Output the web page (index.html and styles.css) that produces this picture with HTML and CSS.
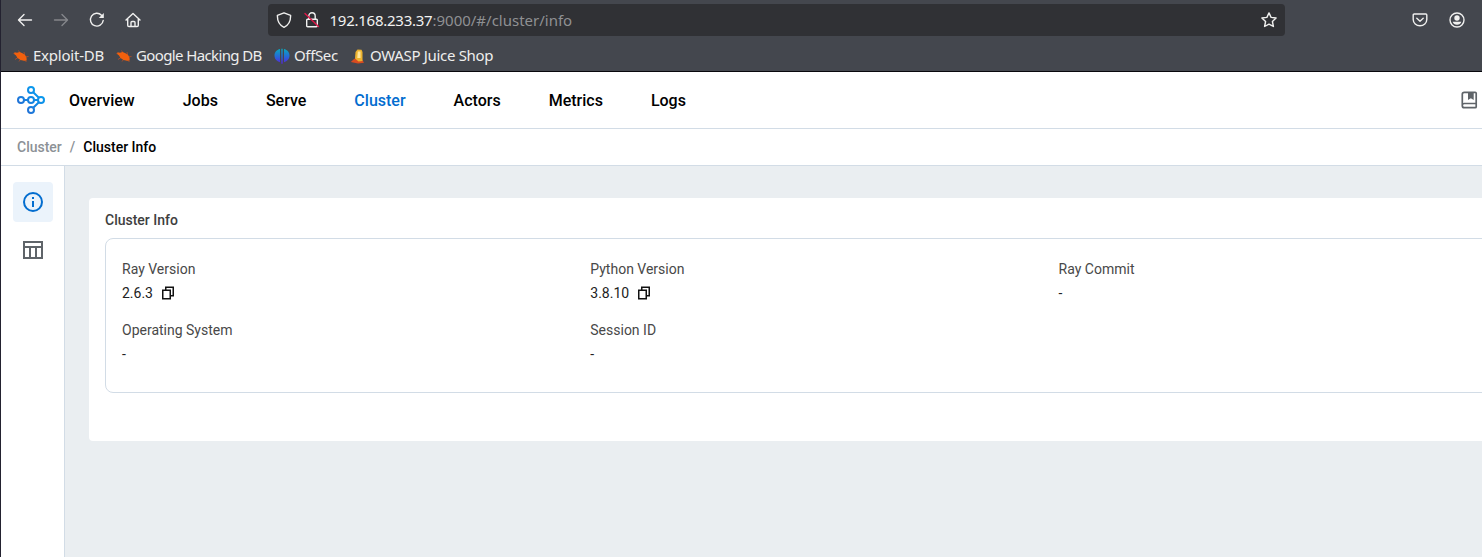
FILE: index.html
```html
<!DOCTYPE html>
<html lang="en">
<head>
<meta charset="utf-8">
<title>Cluster Info</title>
<link rel="stylesheet" href="styles.css">
</head>
<body>
<svg class="defs" width="0" height="0">
  <defs>
    <linearGradient id="ray" x1="0" y1="28" x2="28" y2="0" gradientUnits="userSpaceOnUse"><stop offset="0" stop-color="#2a62cc"/><stop offset="1" stop-color="#00aaf8"/></linearGradient>
    <linearGradient id="offsec" x1="0" y1="0" x2="0" y2="1"><stop offset="0" stop-color="#08a9bd"/><stop offset=".55" stop-color="#2865d8"/><stop offset="1" stop-color="#5a22d8"/></linearGradient>
    <symbol id="bug" viewBox="0 0 16 16">
      <path d="M.5 5.500l4 .5M2 11.500l3-2M6 13.500l1.500-2M15.500 8.500l-3 .3M13.500 14l-2-2M5.500 2.500l1.500 2.500M11 4l.5 3" stroke="#a44c2c" stroke-width="1" fill="none"/>
      <path d="M1.500 4.200l2.500.6 2.500-.8 3 1.200 2.600 1.800 1.400 2.500.2 2.900-2.700.3-3.500-.7-3-2-1.500-2.500-1.800-1.500z" fill="#f2600d"/>
    </symbol>
    <symbol id="copy" viewBox="0 0 14 14">
      <path d="M1.750 4.250h7.500v8.500h-7.500zM4.750 4V1.250h7.500v8.500H9.500" fill="none" stroke="#111" stroke-width="1.500"/>
    </symbol>
  </defs>
</svg>
<div class="window">
  <div class="toolbar">
    <div class="controls">
      <svg width="16" height="16" viewBox="0 0 16 16"><path d="M14.500 8H2M7 2.500L1.500 8 7 13.500"/></svg>
      <svg class="dim" width="16" height="16" viewBox="0 0 16 16"><path d="M1.500 8h12.500M9 2.500L14.500 8 9 13.500"/></svg>
      <svg width="16" height="16" viewBox="0 0 16 16"><path d="M14.200 8.500A6.400 6.400 0 1 1 12.500 3.300"/><path class="solid" d="M14.800 1v5h-5z"/></svg>
      <svg width="16" height="16" viewBox="0 0 16 16"><path d="M1 8l7-6.500L15 8M2.700 7v6.300q0 1.200 1.200 1.200h8.200q1.200 0 1.200-1.200V7M6 14.500v-4q0-1 1-1h2q1 0 1 1v4"/></svg>
    </div>
    <div class="address">
      <svg width="16" height="16" viewBox="0 0 16 16"><path d="M8 .8l6.600 2.500c.2 5.700-1.800 9.800-6.600 12-4.800-2.200-6.800-6.300-6.600-12z"/></svg>
      <svg class="lock" width="16" height="16" viewBox="0 0 16 16"><path d="M4.800 7V4a3.200 3.200 0 0 1 6.400 0v3M3.500 7.200h9q.8 0 .8.800v5.700q0 1-1 1H3.700q-1 0-1-1V8q0-.8.800-.8z"/><path class="slash" d="M1 1.500l13.500 13"/></svg>
      <span class="url">192.168.233.37<span>:9000/#/cluster/info</span></span>
      <svg class="star" width="16" height="16" viewBox="0 0 16 16"><path d="M8 .9l2.100 4.500 5 .6-3.700 3.500 1 5L8 12.100l-4.400 2.400 1-5L.9 6l5-.6z"/></svg>
    </div>
    <div class="actions">
      <svg width="16" height="16" viewBox="0 0 16 16"><path d="M2.200 2h11.600q1 0 1 1V7.500a6.800 6.300 0 0 1-13.600 0V3q0-1 1-1zM4.800 6.300L8 9.200l3.200-2.900"/></svg>
      <svg width="16" height="16" viewBox="0 0 16 16"><circle cx="8" cy="8" r="7"/><circle class="solid" cx="8" cy="6" r="2.700"/><path class="solid" d="M3.700 9.800h8.600c-.5 1.800-2.100 3-4.300 3s-3.800-1.200-4.300-3z"/></svg>
    </div>
  </div>
  <div class="bookmarks">
    <span class="bookmark exploit"><svg width="16" height="16"><use href="#bug"/></svg><span>Exploit-DB</span></span>
    <span class="bookmark hacking"><svg width="16" height="16"><use href="#bug"/></svg><span>Google Hacking DB</span></span>
    <span class="bookmark offsec"><svg width="16" height="16" viewBox="0 0 16 16"><path fill="url(#offsec)" d="M6 .9v13.300C2.700 13.400.5 10.900.5 7.500S2.700 1.700 6 .9zM7.300.8h1.400v15H7.300zM10 .9c3.300.8 5.500 3.200 5.500 6.600s-2.200 5.900-5.500 6.700z"/></svg><span>OffSec</span></span>
    <span class="bookmark juice"><svg width="16" height="16" viewBox="0 0 16 16"><path d="M.8 14l3.500-3.300 7.700.5 2 3.500-6 .8z" fill="#d84b20"/><path d="M5.500 4l2-2.500 4 .2 1 2.300v9l-4 .5-3.500-3z" fill="#edb32f"/><path d="M7.800 3.500h2.700V10H7.300z" fill="#ffe79a"/></svg><span>OWASP Juice Shop</span></span>
  </div>
  <header class="header">
    <svg class="logo" width="28" height="28" viewBox="0 0 28 28" fill="none" stroke="url(#ray)" stroke-width="2"><circle cx="14" cy="4" r="3"/><circle cx="4" cy="14" r="3"/><circle cx="14" cy="14" r="3"/><circle cx="24" cy="14" r="3"/><circle cx="14" cy="24" r="3"/><path d="M7 14h4M17 14h4M16.200 6.200l5.700 5.600M21.900 16.200l-5.700 5.600"/></svg>
    <nav class="nav"><a>Overview</a><a>Jobs</a><a>Serve</a><a class="active">Cluster</a><a>Actors</a><a>Metrics</a><a>Logs</a></nav>
    <svg class="docs" width="18" height="18" viewBox="0 0 18 18"><path d="M3.300 1.300h10.900q1 0 1 1v13.400q0 1-1 1H3.300q-2 0-2-2V3.300q0-2 2-2zM1.300 14.500q0-2 2-2h12" fill="none" stroke="#5f6469" stroke-width="1.700"/><path d="M7 1.500h5.700V9L9.850 7.200 7 9z" fill="#5f6469"/></svg>
  </header>
  <div class="crumbs"><span>Cluster</span><span class="sep">/</span><b>Cluster Info</b></div>
  <div class="body">
    <aside class="sidebar">
      <div class="tab selected"><svg width="20" height="20" viewBox="0 0 20 20"><circle cx="10" cy="10" r="9" fill="none" stroke="#036dcf" stroke-width="2"/><path d="M9 5h2v2H9zM9 9h2v6H9z" fill="#036dcf"/></svg></div>
      <div class="tab"><svg width="20" height="18" viewBox="0 0 20 18"><path d="M1 1h18v16H1zM1 6h18M7 6v11M13 6v11" fill="none" stroke="#5f6469" stroke-width="2"/></svg></div>
    </aside>
    <main class="main">
      <section class="panel">
        <h1>Cluster Info</h1>
        <div class="card">
          <div class="field"><div>Ray Version</div><div class="value">2.6.3<svg width="14" height="14"><use href="#copy"/></svg></div></div>
          <div class="field"><div>Python Version</div><div class="value">3.8.10<svg width="14" height="14"><use href="#copy"/></svg></div></div>
          <div class="field"><div>Ray Commit</div><div class="value">-</div></div>
          <div class="field"><div>Operating System</div><div class="value">-</div></div>
          <div class="field"><div>Session ID</div><div class="value">-</div></div>
        </div>
      </section>
    </main>
  </div>
</div>
</body>
</html>
```
FILE: styles.css
```css
* { box-sizing: border-box; }
body { margin: 0; overflow: hidden; font-family: Roboto, sans-serif; }
svg { display: block; flex: none; }
.defs { position: absolute; }
.window { width: 1482px; height: 557px; overflow: hidden; display: flex; flex-direction: column; border-left: 1px solid #232230; background: #fff; }
.toolbar { height: 40px; flex: none; display: flex; align-items: center; background: #44474e; font-family: "Noto Sans", sans-serif; }
.toolbar svg { fill: none; stroke: #f0f0ef; stroke-width: 1.4; stroke-linecap: round; stroke-linejoin: round; }
.toolbar .dim { stroke: #85878b; }
.toolbar .solid { fill: #f0f0ef; stroke: none; }
.toolbar .slash { stroke: #df1748; }
.controls { display: flex; gap: 20px; width: 267px; padding-left: 15.500px; }
.address { display: flex; align-items: center; width: 1017px; height: 32px; padding: 0 8px; border-radius: 4px; background: #303135; }
.lock { margin-left: 12px; }
.url { margin-left: 9.500px; font-size: 15px; letter-spacing: -.25px; color: #f2f2f1; white-space: nowrap; }
.url span { letter-spacing: 0; color: #8f9093; }
.star { margin-left: auto; }
.actions { display: flex; gap: 20.500px; margin-left: 127px; }
.bookmarks { height: 32px; flex: none; display: flex; align-items: center; padding-left: 12px; background: #44474e; border-bottom: 1px solid #08080d; color: #eeeeed; font: 15px/26px "Noto Sans", sans-serif; }
.bookmark { display: flex; align-items: center; gap: 4px; white-space: nowrap; }
.bookmark span { padding-bottom: 2px; }
.exploit { width: 103px; letter-spacing: -.22px; }
.hacking { width: 158px; letter-spacing: -.62px; }
.offsec { width: 76px; letter-spacing: -.35px; }
.juice { letter-spacing: -.32px; }
.header { height: 57px; flex: none; display: flex; align-items: center; padding-left: 16px; border-bottom: 1px solid #d2dce6; }
.nav { display: flex; gap: 48px; margin-left: 24px; font-size: 16px; font-weight: 500; color: #000; }
.active { color: #036dcf; }
.docs { margin-left: auto; margin-right: 3px; }
.crumbs { height: 37px; flex: none; display: flex; align-items: center; padding-left: 16px; border-bottom: 1px solid #d2dce6; font-size: 14px; font-weight: 500; color: #8c9196; }
.crumbs b { font-weight: 500; color: #000; }
.sep { margin: 0 8px; }
.body { flex: 1; display: flex; min-height: 0; }
.sidebar { width: 64px; flex: none; padding: 16px 12px; border-right: 1px solid #d2dce6; }
.tab { width: 40px; height: 40px; margin-bottom: 8px; border-radius: 4px; display: flex; align-items: center; justify-content: center; }
.selected { background: #ebf3fb; }
.main { flex: 1; padding: 32px 0 0 24px; background: #eaeef1; min-width: 0; overflow: hidden; }
.panel { width: 1437px; height: 243px; padding: 12px 16px; border-radius: 4px; background: #fff; }
.panel h1 { margin: 0 0 8px; font-size: 14px; line-height: 20px; font-weight: 500; color: #3e3e3e; }
.card { width: 1439px; height: 155px; padding: 20px 16px; border: 1px solid #d2dce6; border-radius: 8px; display: grid; grid-template-columns: repeat(3, 468.300px); grid-auto-rows: 45px; row-gap: 16px; align-content: start; font-size: 14px; color: #484848; }
.field { line-height: 20px; }
.value { display: flex; align-items: center; gap: 8px; margin-top: 4px; color: #222; }
```
